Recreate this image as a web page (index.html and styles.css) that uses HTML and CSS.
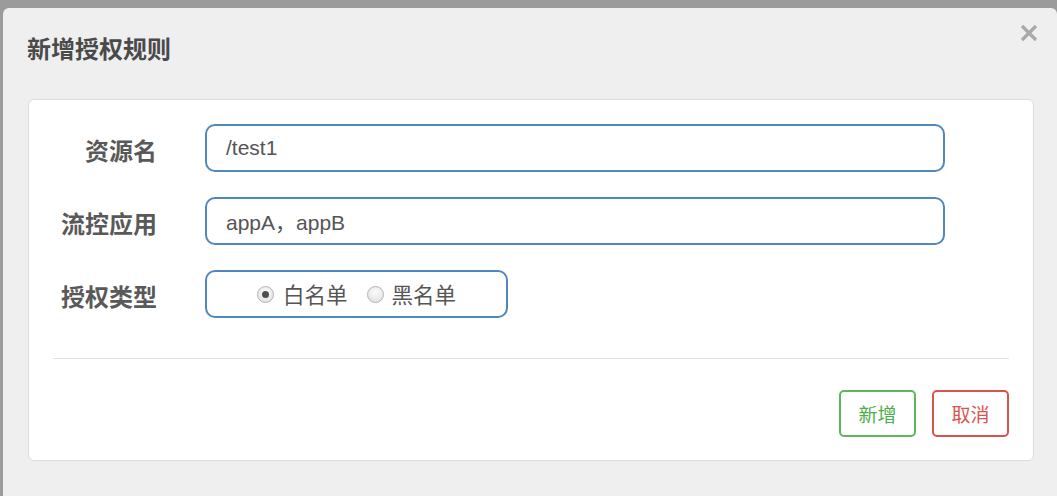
FILE: index.html
```html
<!DOCTYPE html>
<html lang="zh">
<head>
<meta charset="utf-8">
<title>新增授权规则</title>
<link rel="stylesheet" href="styles.css">
</head>
<body>
<div class="backdrop">
  <div class="dialog">
    <header class="dialog-head">
      <h2 class="dialog-title">新增授权规则</h2>
      <button class="close" type="button" aria-label="close">
        <svg width="18" height="18" viewBox="0 0 18 18"><path d="M2 2 L16 16 M16 2 L2 16" stroke="#a9a9a9" stroke-width="3.2" fill="none"/></svg>
      </button>
    </header>
    <div class="card">
      <div class="form-row">
        <label class="form-label">资源名</label>
        <div class="field field-wide">/test1</div>
      </div>
      <div class="form-row">
        <label class="form-label">流控应用</label>
        <div class="field field-wide">appA，appB</div>
      </div>
      <div class="form-row">
        <label class="form-label">授权类型</label>
        <div class="field field-radio">
          <span class="radio checked"></span><span class="radio-text">白名单</span>
          <span class="radio second"></span><span class="radio-text">黑名单</span>
        </div>
      </div>
      <div class="divider"></div>
      <div class="actions">
        <button class="btn btn-add" type="button">新增</button>
        <button class="btn btn-cancel" type="button">取消</button>
      </div>
    </div>
  </div>
</div>
</body>
</html>
```
FILE: styles.css
```css
html, body {
  margin: 0;
  padding: 0;
  width: 1057px;
  height: 496px;
  overflow: hidden;
  background: #9b9b9b;
}
.backdrop {
  padding: 8px 0 0 3px;
  height: 488px;
}
.dialog {
  width: 1054px;
  height: 500px;
  background: #efefef;
  border-radius: 6px 6px 0 0;
  box-sizing: border-box;
  padding: 0 23px 0 25px;
}
.dialog-head {
  display: flex;
  justify-content: space-between;
  align-items: flex-start;
  padding-top: 27px;
}
.dialog-title {
  margin: 0 0 0 -1px;
  font-family: "Noto Sans CJK SC", sans-serif;
  font-size: 24px;
  line-height: 26px;
  font-weight: 700;
  color: #4a4a4a;
}
.close {
  border: 0;
  background: none;
  padding: 0;
  margin: -11px -4px 0 0;
  width: 18px;
  height: 18px;
  display: block;
}
.close svg { display: block; }
.card {
  margin-top: 38px;
  width: 1006px;
  box-sizing: border-box;
  background: #fff;
  border: 1px solid #dcdcdc;
  border-radius: 6px;
  padding: 24px 24px 23px;
}
.form-row {
  display: flex;
  align-items: center;
  gap: 48px;
  margin-bottom: 25px;
}
.form-row:last-of-type { margin-bottom: 0; }
.form-label {
  width: 104px;
  text-align: right;
  font-family: "Noto Sans CJK SC", sans-serif;
  font-size: 24px;
  font-weight: 700;
  color: #595959;
  line-height: 30px;
  padding-top: 4px;
}
.field {
  box-sizing: border-box;
  height: 48px;
  border: 2px solid #5087bf;
  border-radius: 10px;
  font-family: "Liberation Sans", "Noto Sans CJK SC", sans-serif;
  font-size: 21px;
  color: #555;
  display: flex;
  align-items: center;
}
.field-wide {
  width: 740px;
  padding-left: 19px;
}
.field-radio {
  width: 303px;
  justify-content: center;
  font-family: "Noto Sans CJK SC", sans-serif;
  font-size: 21.5px;
  color: #555;
}
.radio {
  width: 17px;
  height: 17px;
  box-sizing: border-box;
  border-radius: 50%;
  border: 1px solid #b4b4b4;
  background: radial-gradient(circle at 50% 35%, #fbfbfb 0%, #e6e6e6 70%, #d4d4d4 100%);
  margin-right: 9px;
  position: relative;
  flex: none;
}
.radio.checked::after {
  content: "";
  position: absolute;
  left: 4px;
  top: 4px;
  width: 7px;
  height: 7px;
  border-radius: 50%;
  background: #4f4f4f;
}
.radio.second { margin-left: 19px; margin-right: 8px; }
.radio-text { line-height: 26px; }
.divider {
  margin-top: 40px;
  height: 1px;
  background: #e3e3e3;
}
.actions {
  margin-top: 31px;
  display: flex;
  justify-content: flex-end;
  gap: 16px;
}
.btn {
  width: 77px;
  height: 47px;
  box-sizing: border-box;
  background: #fff;
  border-radius: 5px;
  font-family: "Noto Sans CJK SC", sans-serif;
  font-size: 19px;
  padding: 0;
}
.btn-add {
  border: 2px solid #5cb85c;
  color: #4cae4c;
}
.btn-cancel {
  border: 2px solid #d9534f;
  color: #d9534f;
}
```
